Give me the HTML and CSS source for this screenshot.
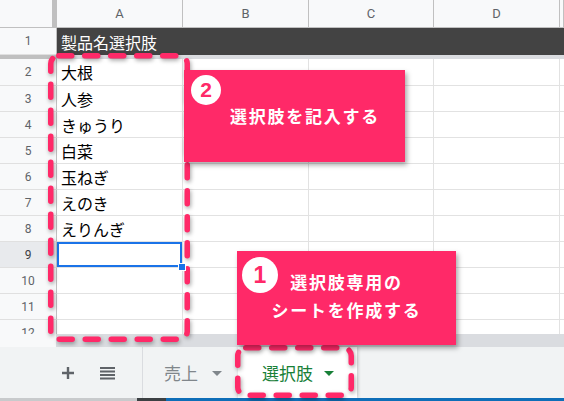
FILE: index.html
```html
<!DOCTYPE html>
<html lang="ja">
<head>
<meta charset="utf-8">
<title>選択肢シート</title>
<link rel="stylesheet" href="styles.css">
</head>
<body>
<div class="page">
  <div class="grid">
    <div class="row hdr">
      <div class="corner"></div>
      <div class="colh">A</div><div class="colh">B</div><div class="colh">C</div><div class="colh">D</div><div class="colh"></div>
    </div>
    <div class="row r1">
      <div class="rowh">1</div>
      <div class="title">製品名選択肢</div>
    </div>
    <div class="band"><div class="band-h"></div><div class="band-c"></div></div>
    <div class="row tall"><div class="rowh">2</div><div class="cell">大根</div><div class="cell"></div><div class="cell"></div><div class="cell"></div><div class="cell"></div></div>
    <div class="row"><div class="rowh">3</div><div class="cell">人参</div><div class="cell"></div><div class="cell"></div><div class="cell"></div><div class="cell"></div></div>
    <div class="row"><div class="rowh">4</div><div class="cell">きゅうり</div><div class="cell"></div><div class="cell"></div><div class="cell"></div><div class="cell"></div></div>
    <div class="row"><div class="rowh">5</div><div class="cell">白菜</div><div class="cell"></div><div class="cell"></div><div class="cell"></div><div class="cell"></div></div>
    <div class="row"><div class="rowh">6</div><div class="cell">玉ねぎ</div><div class="cell"></div><div class="cell"></div><div class="cell"></div><div class="cell"></div></div>
    <div class="row"><div class="rowh">7</div><div class="cell">えのき</div><div class="cell"></div><div class="cell"></div><div class="cell"></div><div class="cell"></div></div>
    <div class="row"><div class="rowh">8</div><div class="cell">えりんぎ</div><div class="cell"></div><div class="cell"></div><div class="cell"></div><div class="cell"></div></div>
    <div class="row"><div class="rowh active">9</div><div class="cell sel"></div><div class="cell"></div><div class="cell"></div><div class="cell"></div><div class="cell"></div></div>
    <div class="row"><div class="rowh">10</div><div class="cell"></div><div class="cell"></div><div class="cell"></div><div class="cell"></div><div class="cell"></div></div>
    <div class="row"><div class="rowh">11</div><div class="cell"></div><div class="cell"></div><div class="cell"></div><div class="cell"></div><div class="cell"></div></div>
    <div class="row"><div class="rowh">12</div><div class="cell"></div><div class="cell"></div><div class="cell"></div><div class="cell"></div><div class="cell"></div></div>
  </div>
  <div class="hscroll"><div class="hs-left"></div><div class="hs-bar"></div></div>
  <div class="tabbar">
    <div class="tools">
      <svg class="ico" width="14" height="14" viewBox="0 0 14 14"><path d="M7 1v12M1 7h12" stroke="#5f6368" stroke-width="2.4" fill="none"/></svg>
      <svg class="ico" width="15" height="14" viewBox="0 0 15 14"><path d="M0 2h15M0 5.5h15M0 9h15M0 12.5h15" stroke="#5f6368" stroke-width="2" fill="none"/></svg>
    </div>
    <div class="tab">売上<span class="caret"></span></div>
    <div class="tab on">選択肢<span class="caret green"></span></div>
  </div>
  <div class="taskbar"><div class="tb1"></div><div class="tb2"></div><div class="tb3"></div></div>

  <svg class="dashes" width="564" height="401" viewBox="0 0 564 401">
    <rect x="50.75" y="55.75" width="136.5" height="283.5" rx="8" fill="none" stroke="#ff2968" stroke-width="5.5" stroke-dasharray="13 13" stroke-linecap="round"/>
    <rect x="237.75" y="347.75" width="113.5" height="47.5" rx="8" fill="none" stroke="#ff2968" stroke-width="5.5" stroke-dasharray="13 13" stroke-linecap="round"/>
  </svg>

  <div class="callout c2">
    <div class="badge b2">2</div>
    <div class="ctext">選択肢を記入する</div>
  </div>
  <div class="callout c1">
    <div class="badge b1">1</div>
    <div class="ctext">選択肢専用の</div>
    <div class="ctext">シートを作成する</div>
  </div>
</div>
</body>
</html>
```
FILE: styles.css
```css
html, body {
  margin: 0;
  padding: 0;
  background: #ffffff;
}
body {
  width: 564px;
  height: 401px;
  overflow: hidden;
  font-family: Roboto, "Liberation Sans", Arial, "Noto Sans CJK JP", sans-serif;
}
.page {
  position: relative;
  width: 564px;
  height: 401px;
  overflow: hidden;
  display: flex;
  flex-direction: column;
}
.grid {
  height: 334px;
  overflow: hidden;
  flex: none;
}
.row {
  display: grid;
  grid-template-columns: 57px 126px 126px 125px 126px 1fr;
  height: 26px;
}
.row.tall { height: 27px; }
.row.hdr { height: 28px; }
.row.r1 { height: 27px; }
.row > div {
  box-sizing: border-box;
}
.corner {
  background: #f8f9fa;
  border-right: 5px solid #c0c0c0;
  border-bottom: 1px solid #c0c0c0;
}
.colh {
  background: #f8f9fa;
  border-right: 1px solid #c0c0c0;
  border-bottom: 1px solid #c0c0c0;
  color: #5f6368;
  font-size: 13px;
  display: flex;
  align-items: center;
  justify-content: center;
}
.rowh {
  background: #f8f9fa;
  border-right: 1px solid #c0c0c0;
  border-bottom: 1px solid #e0e0e0;
  color: #5f6368;
  font-size: 12px;
  display: flex;
  align-items: center;
  justify-content: center;
}
.rowh.active {
  background: #e8eaed;
  color: #3c4043;
}
.title {
  grid-column: 2 / -1;
  background: #434343;
  color: #ffffff;
  font-family: "Noto Sans CJK JP", sans-serif;
  font-size: 16px;
  display: flex;
  align-items: center;
  padding-left: 4px;
}
.band {
  display: flex;
  height: 4px;
}
.band-h { width: 57px; background: #c0c0c0; }
.band-c { flex: 1; background: #dadce0; }
.cell {
  border-right: 1px solid #e2e2e2;
  border-bottom: 1px solid #e2e2e2;
  font-family: "Noto Sans CJK JP", sans-serif;
  font-size: 16px;
  color: #000000;
  display: flex;
  align-items: center;
  padding-left: 4px;
  position: relative;
  white-space: nowrap;
}
.cell.sel {
  box-shadow: inset 0 0 0 2px #1a73e8;
}
.cell.sel::after {
  content: "";
  position: absolute;
  right: -4px;
  bottom: -4px;
  width: 6px;
  height: 6px;
  background: #1a73e8;
  border: 1px solid #ffffff;
  z-index: 2;
}
.hscroll {
  display: flex;
  height: 13px;
  flex: none;
}
.hs-left {
  width: 56px;
  background: #f8f9fa;
  border-right: 1px solid #dadce0;
}
.hs-bar { flex: 1; background: #dadce0; }
.tabbar {
  height: 51px;
  flex: none;
  background: #f1f3f4;
  display: flex;
  align-items: stretch;
}
.tools {
  width: 143px;
  border-right: 1px solid #dadce0;
  display: flex;
  align-items: center;
  padding-left: 61px;
  gap: 25px;
  box-sizing: border-box;
}
.ico { display: block; }
.tab {
  width: 95px;
  display: flex;
  align-items: center;
  padding-left: 21px;
  box-sizing: border-box;
  font-family: "Noto Sans CJK JP", sans-serif;
  font-size: 17px;
  color: #80868b;
}
.tab.on {
  width: 119px;
  background: #ffffff;
  color: #188038;
  padding-left: 24px;
  box-shadow: 1px 0 3px rgba(60, 64, 67, 0.25);
}
.caret {
  display: inline-block;
  width: 0;
  height: 0;
  border-left: 5px solid transparent;
  border-right: 5px solid transparent;
  border-top: 5px solid #80868b;
  margin-left: 14px;
  margin-top: 2px;
}
.caret.green {
  border-top-color: #188038;
  margin-left: 11px;
}
.taskbar {
  height: 3px;
  flex: none;
  display: flex;
}
.tb1 { width: 137px; background: #c8cacc; }
.tb2 { width: 29px; background: #3c4043; }
.tb3 { flex: 1; background: #0e6eb8; }
.dashes {
  position: absolute;
  left: 0;
  top: 0;
  pointer-events: none;
  filter: drop-shadow(1px 2px 2px rgba(0, 0, 0, 0.35));
}
.callout {
  position: absolute;
  background: #ff2968;
  color: #ffffff;
  box-shadow: 2px 3px 5px rgba(0, 0, 0, 0.35);
  font-family: "Noto Sans CJK JP", sans-serif;
  font-weight: 700;
  font-size: 17px;
  letter-spacing: 1.75px;
  box-sizing: border-box;
}
.c2 {
  left: 184px;
  top: 70px;
  width: 221px;
  height: 92px;
  display: flex;
  align-items: center;
  padding-left: 46px;
  padding-bottom: 1px;
}
.c1 {
  left: 237px;
  top: 251px;
  width: 219px;
  height: 94px;
  display: flex;
  flex-direction: column;
  align-items: center;
  justify-content: center;
  padding-bottom: 4px;
  line-height: 28px;
}
.badge {
  position: absolute;
  background: #ffffff;
  color: #ff2968;
  border-radius: 50%;
  font-family: "Liberation Sans", Arial, sans-serif;
  font-weight: 700;
  letter-spacing: 0;
  display: flex;
  align-items: center;
  justify-content: center;
}
.b2 {
  left: 7px;
  top: 5px;
  width: 30px;
  height: 30px;
  font-size: 21px;
}
.b1 {
  left: 5px;
  top: 6px;
  width: 36px;
  height: 36px;
  font-size: 23px;
}
```
